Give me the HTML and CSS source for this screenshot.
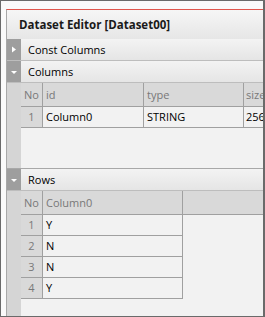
FILE: index.html
```html
<!DOCTYPE html>
<html lang="en">
<head>
    <meta charset="UTF-8">
    <title>Dataset Editor</title>
    <link rel="stylesheet" href="styles.css">
</head>
<body>
    <div class="window">
        <div class="editor">
            <div class="editor-title">Dataset Editor [Dataset00]</div>

            <div class="section-head">
                <span class="toggle">
                    <svg width="14" height="21" viewBox="0 0 14 21"><path d="M5 7.5 L9 10.5 L5 13.5 Z" fill="#fff"/></svg>
                </span>
                <span class="section-label">Const Columns</span>
            </div>

            <div class="section-head">
                <span class="toggle">
                    <svg width="14" height="21" viewBox="0 0 14 21"><path d="M4 10 L10 10 L7 13 Z" fill="#fff"/></svg>
                </span>
                <span class="section-label">Columns</span>
            </div>
            <div class="section-body columns-body">
                <div class="gutter"></div>
                <div class="grid">
                    <div class="grid-head">
                        <div class="cell no">No</div>
                        <div class="cell col-id">id</div>
                        <div class="cell col-type">type</div>
                        <div class="cell col-size">size</div>
                    </div>
                    <div class="grid-row">
                        <div class="cell no">1</div>
                        <div class="cell col-id">Column0</div>
                        <div class="cell col-type">STRING</div>
                        <div class="cell col-size">256</div>
                    </div>
                </div>
            </div>

            <div class="section-head">
                <span class="toggle">
                    <svg width="14" height="21" viewBox="0 0 14 21"><path d="M4 10 L10 10 L7 13 Z" fill="#fff"/></svg>
                </span>
                <span class="section-label">Rows</span>
            </div>
            <div class="section-body rows-body">
                <div class="gutter"></div>
                <div class="grid">
                    <div class="grid-head">
                        <div class="cell no">No</div>
                        <div class="cell col-value">Column0</div>
                    </div>
                    <div class="grid-row short">
                        <div class="cell no">1</div>
                        <div class="cell col-value">Y</div>
                    </div>
                    <div class="grid-row short">
                        <div class="cell no">2</div>
                        <div class="cell col-value">N</div>
                    </div>
                    <div class="grid-row short">
                        <div class="cell no">3</div>
                        <div class="cell col-value">N</div>
                    </div>
                    <div class="grid-row short">
                        <div class="cell no">4</div>
                        <div class="cell col-value">Y</div>
                    </div>
                </div>
            </div>
        </div>
    </div>
</body>
</html>
```
FILE: styles.css
```css
body {
    margin: 0;
    font-family: "Open Sans", "Noto Sans", sans-serif;
    font-size: 11px;
    color: #000;
}
.window {
    width: 265px;
    height: 317px;
    box-sizing: border-box;
    border: 1px solid #6a6a6a;
    border-right-width: 2px;
    background-color: #fafafa;
    padding: 8px 0 0 5px;
    overflow: hidden;
}
.editor {
    height: 100%;
    border-left: 1px solid #a8a8a8;
    border-top: 1px solid #e0554c;
    background-color: #f2f2f2;
    display: flex;
    flex-direction: column;
}
.editor-title {
    height: 29px;
    line-height: 29px;
    padding-left: 12px;
    font-weight: bold;
    font-size: 11.5px;
    color: #1a1a1a;
    background: linear-gradient(#f6f6f6, #e6e6e6);
}
.section-head {
    display: flex;
    height: 21px;
    border-bottom: 1px solid #bdbdbd;
    background: linear-gradient(#f3f3f3, #e5e5e5);
}
.toggle {
    width: 14px;
    background-color: #9e9e9e;
}
.toggle svg {
    display: block;
}
.section-label {
    line-height: 21px;
    padding-left: 7px;
}
.section-body {
    display: flex;
}
.columns-body {
    height: 85px;
    border-bottom: 1px solid #a8a8a8;
}
.rows-body {
    flex: 1;
}
.gutter {
    width: 14px;
    background-color: #d5d5d5;
}
.grid {
    flex: 1;
    overflow: hidden;
}
.grid-head {
    display: flex;
    height: 23px;
    line-height: 23px;
    background-color: #d9d9d9;
    border-bottom: 1px solid #a0a0a0;
    color: #787878;
}
.grid-row {
    display: flex;
    height: 20px;
    line-height: 20px;
    border-bottom: 1px solid #a0a0a0;
}
.grid-row.short {
    width: 162px;
}
.cell {
    flex: none;
    box-sizing: border-box;
    border-right: 1px solid #a0a0a0;
    padding-left: 3px;
    white-space: nowrap;
    overflow: hidden;
}
.cell.no {
    width: 22px;
    padding-left: 3px;
}
.grid-row .cell.no {
    background-color: #d9d9d9;
    color: #787878;
    text-align: center;
    padding-left: 0;
}
.col-id {
    width: 101px;
}
.col-type {
    width: 100px;
}
.col-size {
    width: 40px;
    padding-left: 2px;
    border-right: none;
}
.col-value {
    width: 140px;
}
```
